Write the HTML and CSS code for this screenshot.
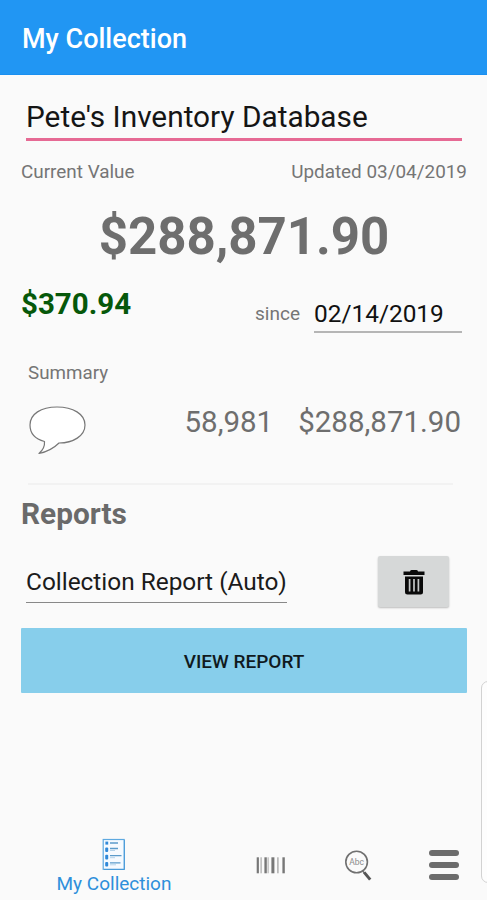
FILE: index.html
```html
<!DOCTYPE html>
<html lang="en">
<head>
  <meta charset="UTF-8">
  <title>My Collection</title>
  <link rel="stylesheet" href="styles.css">
</head>
<body>

<header class="topbar">My Collection</header>

<main class="content">
  <div class="name-field"><span>Pete's Inventory Database</span></div>

  <div class="meta">
    <span class="current">Current Value</span>
    <span class="updated">Updated 03/04/2019</span>
  </div>
  <div class="total"><span>$288,871.90</span></div>

  <div class="change">
    <span class="gain">$370.94</span>
    <span class="since">since</span>
    <span class="date-field">02/14/2019</span>
  </div>

  <div class="summary-title"><span>Summary</span></div>
  <div class="summary">
    <svg class="bubble" width="58" height="52" viewBox="0 0 58 52">
      <path d="M16.5 37.5 C7 35 2 29 2 21 C2 10 13 3 29 3 C45 3 57 10 57 21 C57 32 45 39 31 39 C25 45 18 48 11 49.5 C15 46 17 43 16.5 37.5 Z" fill="#fff" stroke="#777" stroke-width="1.2" stroke-linejoin="round"/>
    </svg>
    <span class="count">58,981</span>
    <span class="value">$288,871.90</span>
  </div>

  <hr class="divider">

  <h2 class="reports-title"><span>Reports</span></h2>
  <div class="report">
    <span class="report-field">Collection Report (Auto)</span>
    <button class="delete" aria-label="Delete">
      <svg width="22" height="26" viewBox="0 0 22 26">
        <path d="M7 2.5 Q7 1 8.5 1 H13.5 Q15 1 15 2.5 H21.5 V6 H0.5 V2.5 Z" fill="#0a0a0a"/>
        <path d="M2 7.5 H20 V23 Q20 25.5 17.5 25.5 H4.5 Q2 25.5 2 23 Z" fill="#0a0a0a"/>
        <path d="M6.6 10 V22.5 M11 10 V22.5 M15.4 10 V22.5" stroke="#c4c6c6" stroke-width="1.7"/>
      </svg>
    </button>
  </div>
  <button class="view"><span>VIEW REPORT</span></button>
</main>

<nav class="tabs">
  <a class="tab tab-active">
    <svg width="24" height="33" viewBox="0 0 24 33">
      <rect x="1.2" y="1.5" width="21" height="29.8" fill="#f5faff" stroke="#5ea9e0" stroke-width="1.2"/>
      <path d="M22.4 2 V31.5 H2" fill="none" stroke="#4a9bd8" stroke-width="1"/>
      <g fill="#2f88d8">
        <rect x="3.4" y="3.6" width="2.8" height="3"/>
        <rect x="3.2" y="9.4" width="3" height="4.6" rx="1"/>
        <rect x="3.2" y="16.8" width="3" height="4.6" rx="1"/>
        <rect x="3.2" y="24" width="3" height="4.6" rx="1"/>
      </g>
      <path d="M8 5 H16 M8 10.5 H16 M8 17.7 H19.5 M8 24.8 H18.5" stroke="#5b9bcb" stroke-width="1.3"/>
      <path d="M8 12.5 H13 M8 19.7 H13 M8 26.8 H14" stroke="#b5d3ea" stroke-width="1"/>
    </svg>
    <span>My Collection</span>
  </a>
  <a class="tab tab-scan">
    <svg width="30" height="17" viewBox="0 0 30 17">
      <g fill="#777">
        <rect x="0.7" y="0.3" width="2.2" height="16"/>
        <rect x="8.4" y="0.3" width="2.4" height="16"/>
        <rect x="15.4" y="0.3" width="3" height="16"/>
        <rect x="26.4" y="0.3" width="2.4" height="16"/>
      </g>
      <g fill="#aaa">
        <rect x="4.5" y="0.3" width="1.2" height="16"/>
        <rect x="11.6" y="0.3" width="1" height="16"/>
        <rect x="21.2" y="0.3" width="1.4" height="16"/>
      </g>
    </svg>
  </a>
  <a class="tab tab-search">
    <svg width="28" height="32" viewBox="0 0 28 32">
      <circle cx="12.6" cy="12" r="10.8" fill="none" stroke="#707070" stroke-width="1.6"/>
      <path d="M18.7 21 L21 23.8" stroke="#707070" stroke-width="1.5"/>
      <path d="M20.2 22.4 L26.2 29.6" stroke="#555" stroke-width="3"/>
      <text x="12.6" y="14.8" text-anchor="middle" class="abc">Abc</text>
    </svg>
  </a>
  <a class="tab tab-menu">
    <i></i><i></i><i></i>
  </a>
</nav>

<div class="edge-panel"></div>

</body>
</html>
```

FILE: styles.css
```css
* {
  box-sizing: border-box;
}
body {
  display: flex;
  flex-direction: column;
  position: relative;
  height: 900px;
  margin: 0;
  overflow: hidden;
  font-family: Roboto, sans-serif;
  background: #fafafa;
  color: #757575;
}
.topbar {
  height: 75px;
  padding-left: 22px;
  border-bottom: 1px solid #1a8ff0;
  background: #2196f3;
  color: #fff;
  font-size: 27px;
  font-weight: 500;
  line-height: 79px;
}
.content {
  padding: 22px 20px 0 21px;
}
.name-field {
  height: 44px;
  margin: 0 5px;
  border-bottom: 3px solid #e66a94;
  color: #151515;
  font-size: 29.8px;
  line-height: 40px;
}
.meta {
  display: flex;
  justify-content: space-between;
  margin-top: 19px;
  font-size: 18.9px;
  line-height: 24px;
}
.total {
  margin-top: 23px;
  text-align: center;
  color: #6e6e6e;
  font-size: 51px;
  font-weight: 700;
  line-height: 60px;
}
.change {
  display: flex;
  align-items: flex-start;
  margin: 19px 5px 0 0;
}
.gain {
  color: #06580a;
  font-size: 29.5px;
  font-weight: 700;
  line-height: 36px;
}
.since {
  margin: 12px 14px 0 auto;
  font-size: 19px;
  line-height: 32px;
}
.date-field {
  width: 148px;
  height: 35px;
  margin-top: 12px;
  border-bottom: 2px solid #b5b5b5;
  color: #111;
  font-size: 24.4px;
  line-height: 32px;
}
.summary-title {
  margin: 28px 0 0 7px;
  font-size: 18.8px;
  line-height: 24px;
}
.summary {
  display: flex;
  align-items: flex-start;
  height: 52px;
  margin: 19px 6px 0 7px;
  color: #6e6e6e;
  font-size: 29.5px;
  line-height: 36px;
}
.count {
  margin: 0 25px 0 auto;
}
.divider {
  height: 2px;
  margin: 27px 14px 0 7px;
  border: 0;
  background: #f2f2f2;
}
.reports-title {
  margin: 11px 0 0;
  color: #6a6a6a;
  font-size: 29.8px;
  font-weight: 700;
  line-height: 36px;
}
.report {
  display: flex;
  justify-content: space-between;
  align-items: flex-start;
  margin: 24px 18px 0 5px;
}
.report-field {
  width: 261px;
  height: 47px;
  border-bottom: 1px solid #888;
  color: #1b1b1b;
  font-size: 24.4px;
  line-height: 51px;
  white-space: nowrap;
}
.delete {
  display: flex;
  align-items: center;
  justify-content: center;
  width: 71px;
  height: 51px;
  padding: 0;
  border: 0;
  border-radius: 2px;
  background: #d6d8d8;
  box-shadow: 0 1px 2px rgba(0, 0, 0, 0.25);
}
.view {
  display: block;
  width: 100%;
  height: 65px;
  margin-top: 21px;
  padding: 2px 0 0;
  border: 0;
  border-radius: 1px;
  background: #87ceeb;
  color: #101a1e;
  font-family: inherit;
  font-size: 19px;
  font-weight: 500;
}
.tabs {
  display: flex;
  align-items: flex-start;
  height: 62px;
  margin-top: auto;
  padding-left: 54px;
}
.tab {
  display: flex;
  flex-direction: column;
  align-items: center;
}
.tab-active {
  width: 120px;
  color: #2e8fdb;
  font-size: 19px;
  line-height: 26px;
  white-space: nowrap;
}
.tab-scan {
  margin: 19px 0 0 82px;
}
.tab-search {
  margin: 12px 0 0 58px;
}
.abc {
  fill: #8c8c8c;
  font-size: 8.5px;
}
.tab-menu {
  gap: 6px;
  margin: 12px 0 0 57px;
}
.tab-menu i {
  width: 30px;
  height: 6px;
  border-radius: 3px;
  background: #6c6c6c;
}
/* handle of the side panel, mostly off screen */
.edge-panel {
  position: absolute;
  top: 681px;
  right: -10px;
  width: 16px;
  height: 202px;
  border: 1px solid #d2d2d2;
  border-radius: 7px;
  background: #fdfdfd;
}
```
